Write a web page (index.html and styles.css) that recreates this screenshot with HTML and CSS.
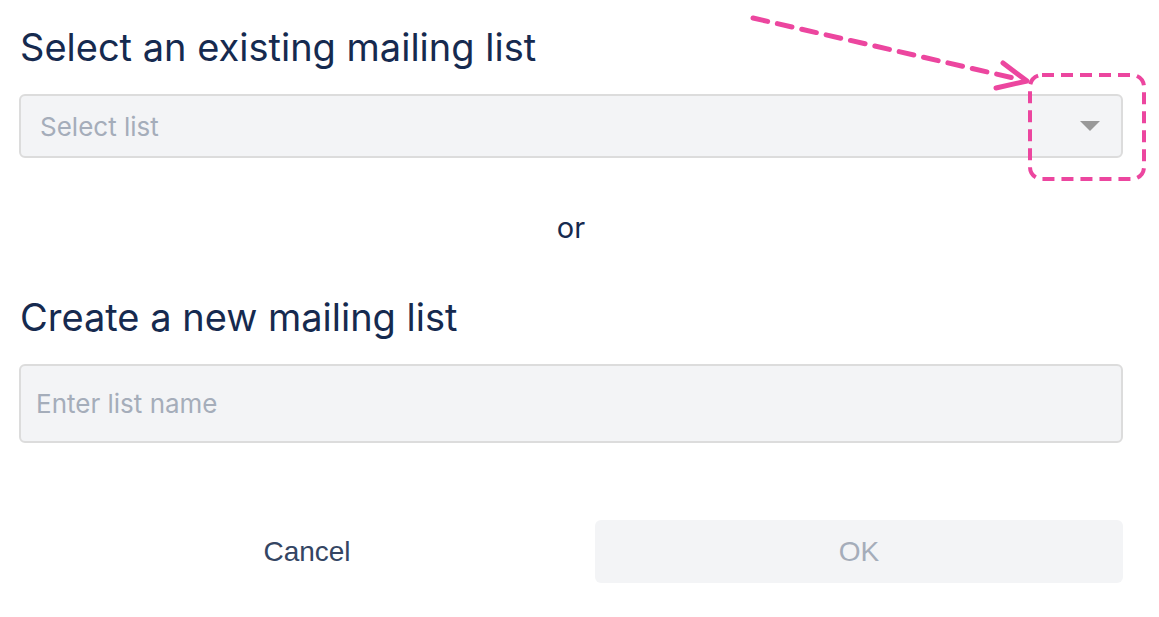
FILE: index.html
```html
<!DOCTYPE html>
<html>
<head>
<meta charset="utf-8">
<link rel="stylesheet" href="styles.css">
</head>
<body>
<div class="dialog">
  <h2 class="title">Select an existing mailing list</h2>
  <div class="select">
    <span class="placeholder">Select list</span>
    <svg class="caret" width="20" height="10" viewBox="0 0 20 10"><path d="M0 0H20L10 10Z" fill="#999"/></svg>
  </div>
  <div class="or">or</div>
  <h2 class="title">Create a new mailing list</h2>
  <div class="input"><span class="placeholder">Enter list name</span></div>
  <div class="actions">
    <button class="btn cancel">Cancel</button>
    <button class="btn ok">OK</button>
  </div>
</div>
<svg class="annot" width="1159" height="617" viewBox="0 0 1159 617">
  <line x1="753" y1="18" x2="1018" y2="79" stroke="#ec469f" stroke-width="5" stroke-linecap="round" stroke-dasharray="15 10"/>
  <path d="M1003 63 L1027 81 L996 88" fill="none" stroke="#ec469f" stroke-width="5" stroke-linecap="round" stroke-linejoin="round"/>
  <rect x="1030" y="75" width="114" height="104" rx="12" fill="none" stroke="#ec469f" stroke-width="4" stroke-dasharray="12 7"/>
</svg>
</body>
</html>
```
FILE: styles.css
```css
html, body {
  margin: 0;
  padding: 0;
  background: #fff;
}
body {
  font-family: Inter, Lato, sans-serif;
  color: #162a4f;
}
.dialog {
  width: 1104px;
  padding: 22px 0 0 19px;
  display: flex;
  flex-direction: column;
}
.title {
  margin: 0;
  font-size: 38px;
  font-weight: 400;
  line-height: 50px;
  padding-left: 1px;
}
.select {
  margin-top: 22px;
  height: 60px;
  border: 2px solid #dcdcdc;
  border-radius: 6px;
  background: #f3f4f6;
  display: flex;
  align-items: center;
  justify-content: space-between;
  padding: 0 21px 0 19px;
}
.placeholder {
  font-size: 26px;
  color: #a5adba;
}
.or {
  text-align: center;
  font-size: 29px;
  margin-top: 50px;
  line-height: 40px;
  color: #162a4f;
}
.or + .title {
  margin-top: 44px;
}
.input {
  margin-top: 22px;
  height: 75px;
  border: 2px solid #dcdcdc;
  border-radius: 6px;
  background: #f3f4f6;
  display: flex;
  align-items: center;
  padding: 0 15px;
}
.actions {
  margin-top: 77px;
  display: flex;
}
.btn {
  height: 63px;
  border: none;
  border-radius: 6px;
  font-family: "Liberation Sans", Arial, sans-serif;
  font-size: 28px;
  background: transparent;
  padding: 0;
}
.cancel {
  width: 576px;
  color: #344563;
}
.ok {
  flex: 1;
  background: #f3f4f6;
  color: #a5adba;
}
.annot {
  position: absolute;
  left: 0;
  top: 0;
  pointer-events: none;
}
```
